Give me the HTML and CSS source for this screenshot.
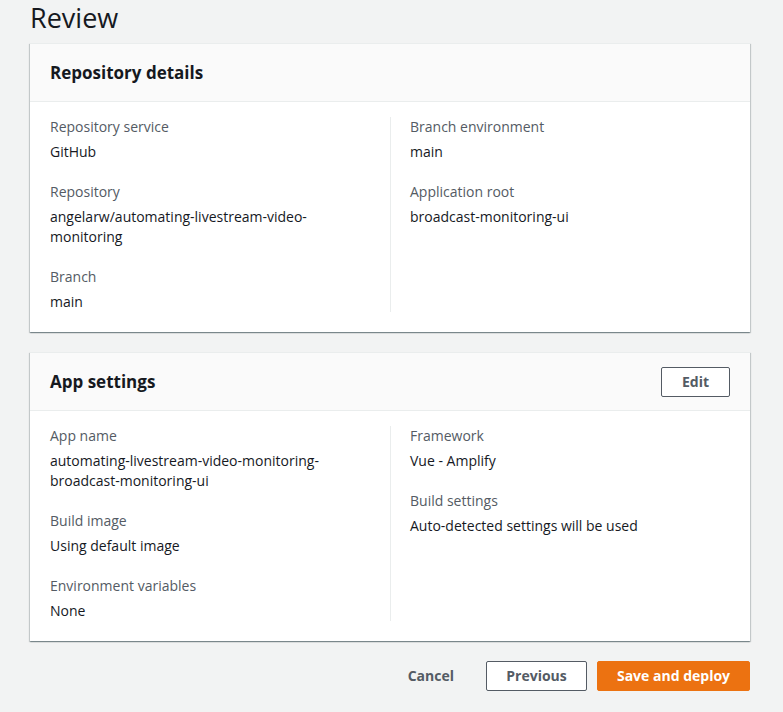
FILE: index.html
```html
<!DOCTYPE html>
<html>
<head>
<meta charset="utf-8">
<link rel="stylesheet" href="styles.css">
</head>
<body>
<div class="page">
  <h1 class="title">Review</h1>

  <section class="card">
    <div class="card-header">
      <h2 class="card-title">Repository details</h2>
    </div>
    <div class="card-body">
      <div class="col">
        <div class="item">
          <div class="label">Repository service</div>
          <div class="value">GitHub</div>
        </div>
        <div class="item">
          <div class="label">Repository</div>
          <div class="value">angelarw/automating-livestream-video-<br>monitoring</div>
        </div>
        <div class="item">
          <div class="label">Branch</div>
          <div class="value">main</div>
        </div>
      </div>
      <div class="col col-right">
        <div class="item">
          <div class="label">Branch environment</div>
          <div class="value">main</div>
        </div>
        <div class="item">
          <div class="label">Application root</div>
          <div class="value">broadcast-monitoring-ui</div>
        </div>
      </div>
    </div>
  </section>

  <section class="card">
    <div class="card-header">
      <h2 class="card-title">App settings</h2>
      <button class="btn btn-normal">Edit</button>
    </div>
    <div class="card-body">
      <div class="col">
        <div class="item">
          <div class="label">App name</div>
          <div class="value">automating-livestream-video-monitoring-<br>broadcast-monitoring-ui</div>
        </div>
        <div class="item">
          <div class="label">Build image</div>
          <div class="value">Using default image</div>
        </div>
        <div class="item">
          <div class="label">Environment variables</div>
          <div class="value">None</div>
        </div>
      </div>
      <div class="col col-right">
        <div class="item">
          <div class="label">Framework</div>
          <div class="value">Vue - Amplify</div>
        </div>
        <div class="item">
          <div class="label">Build settings</div>
          <div class="value">Auto-detected settings will be used</div>
        </div>
      </div>
    </div>
  </section>

  <div class="actions">
    <button class="btn btn-link">Cancel</button>
    <button class="btn btn-normal btn-prev">Previous</button>
    <button class="btn btn-primary">Save and deploy</button>
  </div>
</div>
</body>
</html>
```

FILE: styles.css
```css
* { box-sizing: border-box; }
html, body {
  margin: 0;
  padding: 0;
  background: #f2f3f3;
}
body {
  font-family: "Open Sans", "Liberation Sans", Arial, sans-serif;
  color: #16191f;
  font-size: 14px;
  line-height: 20px;
}
.page {
  width: 720px;
  margin-left: 30px;
}
.title {
  margin: 0;
  font-size: 27px;
  font-weight: 400;
  line-height: 36px;
  padding-top: 0;
  height: 43px;
  color: #16191f;
}
.card {
  background: #fff;
  border-top: 1px solid #eaeded;
  box-shadow: 0 1px 1px 0 rgba(0,28,36,0.3), 1px 1px 1px 0 rgba(0,28,36,0.15), -1px 1px 1px 0 rgba(0,28,36,0.15);
  margin-bottom: 20px;
}
.card-header {
  background: #fafafa;
  border-bottom: 1px solid #eaeded;
  height: 58px;
  padding: 0 20px;
  display: flex;
  align-items: center;
  justify-content: space-between;
}
.card-title {
  margin: 0;
  font-size: 17px;
  font-weight: 700;
  line-height: 22px;
  color: #16191f;
}
.card-body {
  display: grid;
  grid-template-columns: 1fr 1fr;
  padding: 15px 20px 20px;
}
.col {
  display: flex;
  flex-direction: column;
  gap: 20px;
  padding-right: 20px;
  min-width: 0;
}
.col-right {
  border-left: 1px solid #eaeded;
  padding-left: 19px;
}
.label {
  color: #545b64;
  line-height: 20px;
  margin-bottom: 5px;
}
.value {
  color: #16191f;
  line-height: 20px;
}
.btn {
  font-family: inherit;
  font-size: 14px;
  font-weight: 700;
  line-height: 20px;
  border-radius: 2px;
  cursor: pointer;
  height: 30px;
  padding: 4px 20px;
}
.btn-normal {
  background: #fff;
  border: 1px solid #545b64;
  color: #545b64;
}
.card-header .btn-normal {
  width: 69px;
  padding: 4px 0;
}
.actions {
  display: flex;
  justify-content: flex-end;
  align-items: center;
  gap: 10px;
  margin-top: 0;
}
.btn-link {
  background: transparent;
  border: 1px solid transparent;
  color: #545b64;
  margin-right: 1px;
}
.btn-prev {
  width: 101px;
  padding: 4px 0;
}
.btn-primary {
  background: #ec7211;
  border: 1px solid #ec7211;
  color: #fff;
  width: 153px;
  padding: 4px 0;
}
```
